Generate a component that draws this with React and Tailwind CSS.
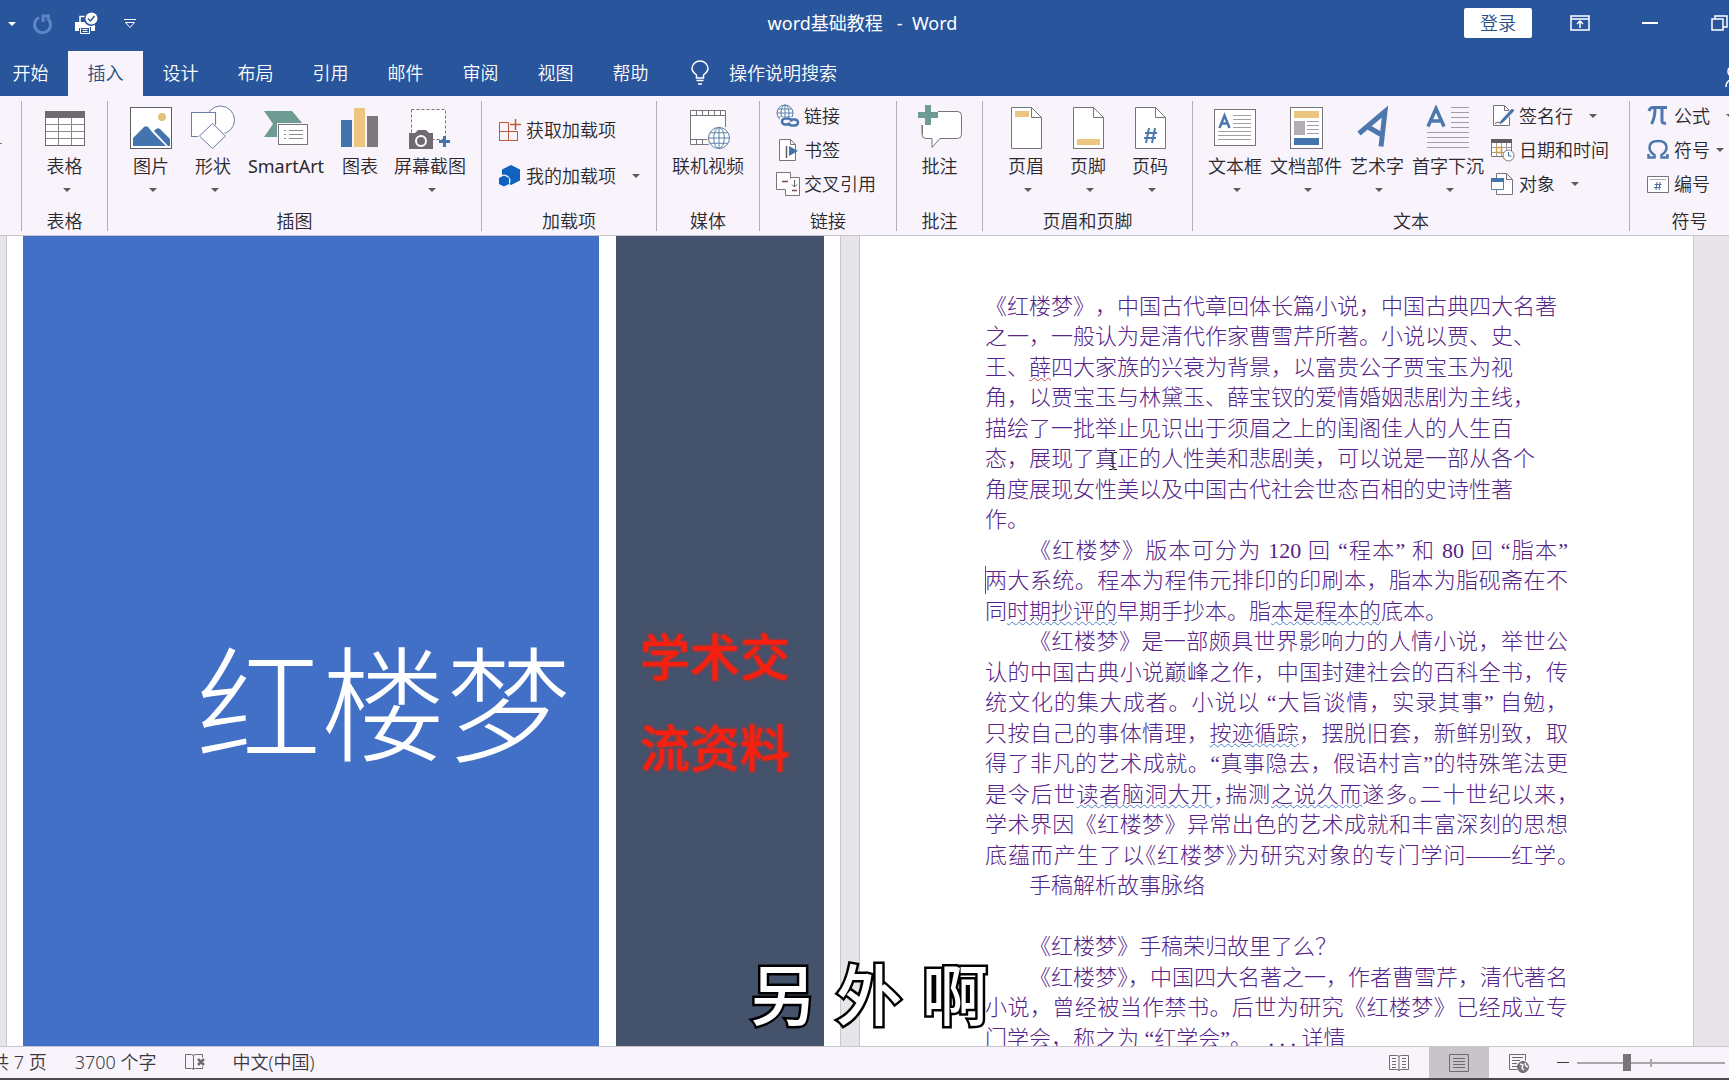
import React, { useState } from 'react';

const TABS = ['开始', '插入', '设计', '布局', '引用', '邮件', '审阅', '视图', '帮助'];

const Caret = ({ className = '' }) => (
    <svg width="8" height="4" viewBox="0 0 8 4" className={`shrink-0 fill-[#5c5a60] ${className}`} aria-hidden="true">
        <path d="M0 0h8L4 4z" />
    </svg>
);

/* ---------- large ribbon icons (44 x 44) ---------- */

const Icon = ({ size = 44, children }) => (
    <svg width={size} height={size} viewBox={`0 0 ${size} ${size}`} fill="none" className="shrink-0" aria-hidden="true">
        {children}
    </svg>
);

const TableIcon = () => (
    <Icon>
        <rect x="2.500" y="6.500" width="39" height="34" fill="#fff" stroke="#6e6a70" />
        <rect x="2" y="6" width="40" height="7" fill="#6e6a70" />
        <path d="M15.500 13v27M28.500 13v27M3 19.500h38M3 26.500h38M3 33.500h38" stroke="#8a868c" />
    </Icon>
);

const PictureIcon = () => (
    <Icon>
        <rect x="1.500" y="2.500" width="41" height="41" fill="#fff" stroke="#5f5c62" />
        <circle cx="33" cy="12" r="4" fill="#e2c07e" />
        <path d="M4 41v-8l11-11q2-1.500 4 0l5 6 13 13z" fill="#4474ad" />
        <path d="M25 26l2-2q2-1.500 4 0l10 10v7h-2z" fill="#4474ad" />
    </Icon>
);

const ShapesIcon = () => (
    <Icon>
        <circle cx="29.500" cy="15" r="14" fill="#fff" stroke="#6b7fa3" />
        <rect x="0" y="7" width="26" height="25" fill="#f9f4fb" />
        <rect x=".5" y="7.500" width="24" height="24" fill="#fff" stroke="#6b7fa3" />
        <path d="M21.500 17l15 14-15 14-15-14z" fill="#f9f4fb" />
        <path d="M21.500 18.500l13 12.500-13 12.500L8.500 31z" fill="#fff" stroke="#6b7fa3" />
    </Icon>
);

const SmartArtIcon = () => (
    <Icon>
        <path d="M0 6h28l11 13H14v13H0l9-13z" fill="#6f9c92" />
        <rect x="13" y="18" width="32" height="23" fill="#f9f4fb" />
        <rect x="14.500" y="19.500" width="29" height="20" fill="#fff" stroke="#77747a" />
        <path d="M20 25.500h2M20 29.500h2M20 33.500h2M25 25.500h14M25 29.500h14M25 33.500h14" stroke="#8a878d" />
    </Icon>
);

const ChartIcon = () => (
    <Icon>
        <rect x="3" y="15" width="11" height="27" fill="#4474ad" />
        <rect x="16" y="3" width="11" height="39" fill="#ecc67f" />
        <rect x="29" y="11" width="11" height="31" fill="#7c787d" />
    </Icon>
);

const ScreenshotIcon = () => (
    <Icon>
        <rect x="3.500" y="4.500" width="34" height="30" fill="#fff" stroke="#77747a" strokeDasharray="3 2" />
        <path d="M1 28h6l3-3h8l3 3h4v16H1z" fill="#6e6a70" />
        <circle cx="13" cy="36" r="5" fill="#6e6a70" stroke="#fff" strokeWidth="2" />
        <path d="M31 36.500h11M36.500 31v11" stroke="#4474ad" strokeWidth="3" />
    </Icon>
);

const Globe = ({ x, y, r }) => (
    <g transform={`translate(${x} ${y})`} stroke="#5b80a8">
        <circle r={r} fill="#fff" />
        <ellipse rx={r / 2} ry={r} />
        <path d={`M${-r} 0H${r}M0 ${-r}V${r}M${-r * 0.85} ${-r / 2}H${r * 0.85}M${-r * 0.85} ${r / 2}H${r * 0.85}`} />
    </g>
);

const VideoIcon = () => (
    <Icon>
        <path d="M4.500 5.500h35v34h-35z" fill="#fff" />
        <path d="M39.500 22V5.500h-35v34h18v-5h-18M4.500 10.500h35M10.500 5.500v5M16.500 5.500v5M22.500 5.500v5M28.500 5.500v5M34.500 5.500v5M10.500 34.500v5M16.500 34.500v5" stroke="#77747a" />
        <circle cx="33" cy="33" r="12" fill="#f9f4fb" />
        <Globe x={33} y={33} r={10.5} />
    </Icon>
);

const CommentIcon = () => (
    <Icon>
        <path d="M4.500 6.500h35q4 0 4 4v19q0 4-4 4H22l-8 9v-9H8q-4 0-4-4v-19z" fill="#fff" stroke="#77747a" />
        <path d="M-1 -1h21v21H-1z" fill="#f9f4fb" />
        <path d="M20 6.500h20M4.500 20v9" stroke="#77747a" />
        <path d="M8 12h12v8H8z" fill="#fff" />
        <path d="M0 10h20M10 0v20" stroke="#6f9c92" strokeWidth="6" />
    </Icon>
);

const PageIcon = ({ children }) => (
    <Icon>
        <path d="M7.500 2.500h20l10 10v31h-30z" fill="#fff" stroke="#77747a" />
        <path d="M27.500 2.500v10h10" stroke="#77747a" />
        {children}
    </Icon>
);

const TextBoxIcon = () => (
    <Icon>
        <rect x="1.500" y="4.500" width="41" height="36" fill="#fff" stroke="#77747a" />
        <path d="M6.500 23l5-12.500 5 12.500M8 18.500h7" stroke="#4d78ad" strokeWidth="2.500" />
        <path d="M20 10.500h18M20 14.500h18M20 18.500h18M20 22.500h18M5 26.500h33M5 30.500h33M5 34.500h33" stroke="#a19da4" />
    </Icon>
);

const QuickPartsIcon = () => (
    <Icon>
        <rect x="6.500" y="2.500" width="32" height="41" fill="#fff" stroke="#77747a" />
        <rect x="10" y="6" width="25" height="7" fill="#ecc67f" />
        <rect x="10" y="16" width="11" height="14" fill="#b3aeb5" />
        <path d="M23 16.500h12M23 20.500h12M23 24.500h12M23 28.500h12" stroke="#a19da4" />
        <rect x="10" y="33" width="25" height="7" fill="#4474ad" />
    </Icon>
);

const WordArtIcon = () => (
    <Icon>
        <path d="M4 28.500L30 6.500l-4 35M13 22l14 8" stroke="#4d78ad" strokeWidth="5" />
    </Icon>
);

const DropCapIcon = () => (
    <Icon>
        <path d="M2 21.500L10 3.500l8 18M5 16h10" stroke="#4d78ad" strokeWidth="3.500" />
        <path d="M25 2.500h18M25 7.500h18M25 12.500h18M25 17.500h18M25 22.500h18M1 27.500h42M1 32.500h42M1 37.500h42M1 42.500h42" stroke="#a19da4" />
    </Icon>
);

/* ---------- small ribbon icons (24 x 24) ---------- */

const GetAddinsIcon = () => (
    <Icon size={24}>
        <path d="M1.500 4.500h9v18h-9zM1.500 13.500h18v9h-18zM19.500 13.500v9" stroke="#c0593a" />
        <path d="M17.500 1v11M12 6.500h11" stroke="#c0593a" strokeWidth="1.500" />
    </Icon>
);

const MyAddinsIcon = () => (
    <Icon size={24}>
        <path d="M13 1l9 4.500v11L13 21l-9-4.500v-11z" fill="#0f62bd" />
        <circle cx="6" cy="17" r="6.500" fill="#f9f4fb" />
        <path d="M6 11.500l5 2.500v6L6 22.500 1 20v-6z" fill="#0f62bd" />
    </Icon>
);

const LinkIcon = () => (
    <Icon size={24}>
        <Globe x={9} y={9} r={8} />
        <rect x="4" y="13" width="19" height="10" fill="#f9f4fb" />
        <path d="M13 20.500h-4q-3-.5-3-3t3-3h3q3 0 3.500 3M15 15.500h4q3 .5 3 3t-3 3h-3q-3 0-3.500-3" stroke="#4474ad" strokeWidth="2.500" />
    </Icon>
);

const BookmarkIcon = () => (
    <Icon size={24}>
        <path d="M3.500 1.500h11l5 5v16h-16zM14.500 1.500v5h5" fill="#fff" stroke="#77747a" />
        <path d="M10.500 8v12" stroke="#5f5c62" strokeWidth="1.500" />
        <path d="M13 8l9 5-9 5z" fill="#4474ad" />
    </Icon>
);

const CrossRefIcon = () => (
    <Icon size={24}>
        <path d="M.5.500h14v17H.5z" fill="#fff" stroke="#77747a" />
        <path d="M15 5.500h8.500v18h-14V18" fill="#fff" stroke="#77747a" />
        <path d="M6 9.500h6M16 18.500h5" stroke="#7a4a4a" strokeWidth="1.500" />
        <path d="M18.500 8v7M16 12.500l2.500 2.500 2.500-2.500" stroke="#5f5c62" />
    </Icon>
);

const SignatureIcon = () => (
    <Icon size={24}>
        <path d="M2.500 1.500h11l5 5v15h-16zM13.500 1.500v5h5" fill="#fff" stroke="#77747a" />
        <path d="M9 17L21 4l3 2.500L12 19l-4 1.500z" fill="#4474ad" stroke="#f9f4fb" />
        <path d="M4 19.500q3-3 6 0" stroke="#5f5c62" />
    </Icon>
);

const DateIcon = () => (
    <Icon size={24}>
        <path d="M.5 1.500h20v17H.5z" fill="#fff" stroke="#77747a" />
        <path d="M0 1h21v4H0z" fill="#5f5c62" />
        <path d="M5.500 5v13M10.500 5v13M15.500 5v13M1 9.500h19M1 14.500h19" stroke="#a19da4" />
        <path d="M5.500 9.500h5v5h-5z" stroke="#d09a3e" strokeWidth="1.500" />
        <circle cx="17.500" cy="17.500" r="5.500" fill="#fff" stroke="#77747a" />
        <path d="M17.500 14v4h3" stroke="#4474ad" />
    </Icon>
);

const ObjectIcon = () => (
    <Icon size={24}>
        <path d="M5.500 1.500h10l6 6v15h-16zM15.500 1.500v6h6" fill="#fff" stroke="#77747a" />
        <path d="M.5 6.500h12v11H.5z" fill="#fff" stroke="#5b80a8" />
        <path d="M0 6h13v4H0z" fill="#4474ad" />
    </Icon>
);

const PiIcon = () => (
    <Icon size={24}>
        <path d="M3 7q1-3.500 4-3.500h14" stroke="#4d78ad" strokeWidth="3" />
        <path d="M9 4q0 10-3.500 16M16 4v13q0 3 4 2" stroke="#4d78ad" strokeWidth="3" />
    </Icon>
);

const OmegaIcon = () => (
    <Icon size={24}>
        <path d="M2.500 16v3.500h6V17q-5-3-5-7.500 0-6.500 8.500-6.500t8.500 6.500q0 4.500-5 7.500v2.500h6V16" stroke="#4d78ad" strokeWidth="2.500" />
    </Icon>
);

const NumberIcon = () => (
    <Icon size={24}>
        <path d="M1.500 4.500h21v16h-21z" fill="#fff" stroke="#77747a" />
        <path d="M4 7.500h16" stroke="#b3aeb5" />
        <path d="M11 10l-1 8M14 10l-1 8M8.500 12.500h7M8 15.500h7" stroke="#4d6d9a" />
    </Icon>
);

/* ---------- ribbon parts ---------- */

const BigButton = ({ icon, label, caret, className = '' }) => (
    <button className={`flex flex-col items-center whitespace-nowrap ${className}`}>
        {icon}
        <span className="mt-[5px] leading-6">{label}</span>
        {caret && <Caret className="mt-[10px] ml-1" />}
    </button>
);

const SmallButton = ({ icon, label, caret, caretGap = 'ml-4' }) => (
    <button className="flex h-[34px] items-center whitespace-nowrap">
        {icon}
        <span className="ml-1 leading-6">{label}</span>
        {caret && <Caret className={caretGap} />}
    </button>
);

const Group = ({ label, className = '', children }) => (
    <section
        aria-label={label}
        className={`mb-1 flex shrink-0 flex-col border-r border-[#b5b0b8] ${className}`}
    >
        <div className="flex h-[110px] shrink-0 items-start pt-1">{children}</div>
        <div className="text-center leading-5">{label}</div>
    </section>
);

const TitleBar = () => (
    <header className="grid h-[51px] grid-cols-[1fr_auto_1fr] items-start text-white">
        <div className="flex h-12 items-center pl-2">
            <svg width="8" height="4" viewBox="0 0 8 4" fill="#fff"><path d="M0 0h8L4 4z" /></svg>
            <button aria-label="重复" className="ml-4">
                <svg width="22" height="22" viewBox="0 0 22 22" fill="none" stroke="#5f86c4" strokeWidth="3">
                    <path d="M7 4.500a8 8 0 1 0 8 .5" />
                    <path d="M11 9V3h7" />
                </svg>
            </button>
            <button aria-label="快速打印" className="ml-5">
                <svg width="24" height="24" viewBox="0 0 24 24" fill="none">
                    <path d="M1 10h20v9h-4v-3H5v3H1z" fill="#fff" />
                    <path d="M6 10V4.500h8" stroke="#fff" strokeWidth="1.500" />
                    <path d="M6 15h11v7H6z" fill="#28559c" />
                    <path d="M6.500 15.500h9v6h-9zM8.500 17.500h5M8.500 19.500h5" stroke="#fff" />
                    <circle cx="17" cy="7" r="7" fill="#28559c" />
                    <circle cx="17.500" cy="6.500" r="6" fill="#fff" />
                    <path d="M14 6.500l2.500 2.500 4-5" stroke="#28559c" strokeWidth="1.500" />
                </svg>
            </button>
            <button aria-label="自定义快速访问工具栏" className="ml-[26px]">
                <svg width="12" height="10" viewBox="0 0 12 10" fill="none" stroke="#fff">
                    <path d="M0 .5h12M1.500 3.500h9L6 8.500z" />
                </svg>
            </button>
        </div>
        <h1 className="pt-[11px] pr-1 text-[18px] leading-6 font-normal whitespace-pre">word基础教程&nbsp;&nbsp; -&nbsp; Word</h1>
        <div className="flex h-[46px] items-center justify-end">
            <button className="h-[30px] w-[68px] rounded-xs bg-white text-[18px] leading-6 text-[#2a4f86]">登录</button>
            <button aria-label="功能区显示选项" className="ml-[38px]">
                <svg width="20" height="16" viewBox="0 0 20 16" fill="none" stroke="#fff" strokeWidth="1.500">
                    <path d="M1 1h18v14H1zM1 4h18M10 13V6M7 9l3-3 3 3" />
                </svg>
            </button>
            <button aria-label="最小化" className="ml-[52px] h-[2px] w-4 bg-white" />
            <button aria-label="还原" className="ml-[53px]">
                <svg width="18" height="16" viewBox="0 0 18 16" fill="none" stroke="#fff" strokeWidth="1.500">
                    <path d="M1 4h11v11H1zM4 4V1h12v11h-4" />
                </svg>
            </button>
        </div>
    </header>
);

const TabBar = ({ active, onSelect }) => (
    <nav className="flex h-[45px] items-stretch overflow-hidden text-[18px] text-white">
        <div className="-ml-[7px] flex">
            {TABS.map((tab) => (
                <button
                    key={tab}
                    onClick={() => onSelect(tab)}
                    className={`w-[75px] pb-[2px] leading-6 ${tab === active ? 'bg-[#f9f4fb] text-[#2a4f86]' : ''}`}
                >
                    {tab}
                </button>
            ))}
        </div>
        <button className="ml-[23px] flex items-center pb-[2px]">
            <svg width="18" height="26" viewBox="0 0 18 26" fill="none" stroke="#fff" strokeWidth="1.500">
                <path d="M5.500 18v-3Q1 11.500 1 8.500a8 7.500 0 0 1 16 0q0 3-4.500 6.500v3zM5.500 20.500h7M7 24h4" />
            </svg>
            <span className="ml-5 leading-6">操作说明搜索</span>
        </button>
        <svg width="4" height="22" viewBox="0 0 4 22" fill="none" stroke="#fff" strokeWidth="1.500" className="mt-4 ml-auto">
            <path d="M4 1q-2 3 0 7M1 20q0-5 4-7" />
        </svg>
    </nav>
);

const Ribbon = () => (
    <div className="flex h-[140px] shrink-0 overflow-hidden border-b border-[#c9c5cc] bg-[#f9f4fb] pt-[5px] text-[18px] text-[#2b282e]">
        <div className="mb-1 w-[22px] shrink-0 border-r border-[#b5b0b8] pt-[42px]">
            <div className="h-px w-[2px] bg-[#77747a]" />
        </div>
        <Group label="表格" className="w-[86px]">
            <BigButton icon={<TableIcon />} label="表格" caret className="w-full" />
        </Group>
        <Group label="插图" className="w-[374px]">
            <div className="flex pl-3">
                <BigButton icon={<PictureIcon />} label="图片" caret className="w-[62px]" />
                <BigButton icon={<ShapesIcon />} label="形状" caret className="w-[62px]" />
                <BigButton icon={<SmartArtIcon />} label="SmartArt" className="w-[84px] font-normal" />
                <BigButton icon={<ChartIcon />} label="图表" className="w-[64px]" />
                <BigButton icon={<ScreenshotIcon />} label="屏幕截图" caret className="w-[76px]" />
            </div>
        </Group>
        <Group label="加载项" className="w-[175px]">
            <div className="flex flex-col gap-3 pt-2 pl-4">
                <SmallButton icon={<GetAddinsIcon />} label="获取加载项" />
                <SmallButton icon={<MyAddinsIcon />} label="我的加载项" caret />
            </div>
        </Group>
        <Group label="媒体" className="w-[103px]">
            <BigButton icon={<VideoIcon />} label="联机视频" className="w-full" />
        </Group>
        <Group label="链接" className="w-[137px]">
            <div className="-mt-[6px] flex flex-col pl-4">
                <SmallButton icon={<LinkIcon />} label="链接" />
                <SmallButton icon={<BookmarkIcon />} label="书签" />
                <SmallButton icon={<CrossRefIcon />} label="交叉引用" />
            </div>
        </Group>
        <Group label="批注" className="w-[86px]">
            <BigButton icon={<CommentIcon />} label="批注" className="w-full" />
        </Group>
        <Group label="页眉和页脚" className="w-[210px]">
            <div className="flex pl-3">
                <BigButton
                    icon={<PageIcon><path d="M11 6h14v6H11z" fill="#ecc67f" /></PageIcon>}
                    label="页眉"
                    caret
                    className="w-[62px]"
                />
                <BigButton
                    icon={<PageIcon><path d="M11 34h23v6H11z" fill="#ecc67f" /></PageIcon>}
                    label="页脚"
                    caret
                    className="w-[62px]"
                />
                <BigButton
                    icon={<PageIcon><path d="M21 23l-3 15M27 23l-3 15M17 28h12M16 33h12" stroke="#4d78ad" strokeWidth="2" /></PageIcon>}
                    label="页码"
                    caret
                    className="w-[62px]"
                />
            </div>
        </Group>
        <Group label="文本" className="w-[437px]">
            <div className="flex pl-[7px]">
                <BigButton icon={<TextBoxIcon />} label="文本框" caret className="w-[70px]" />
                <BigButton icon={<QuickPartsIcon />} label="文档部件" caret className="w-[72px]" />
                <BigButton icon={<WordArtIcon />} label="艺术字" caret className="w-[70px]" />
                <BigButton icon={<DropCapIcon />} label="首字下沉" caret className="w-[72px]" />
            </div>
            <div className="-mt-[6px] flex flex-col pl-[7px]">
                <SmallButton icon={<SignatureIcon />} label="签名行" caret />
                <SmallButton icon={<DateIcon />} label="日期和时间" />
                <SmallButton icon={<ObjectIcon />} label="对象" caret />
            </div>
        </Group>
        <Group label="符号" className="w-[120px]">
            <div className="-mt-[6px] flex flex-col pl-4">
                <SmallButton icon={<PiIcon />} label="公式" caret />
                <SmallButton icon={<OmegaIcon />} label="符号" caret caretGap="ml-[6px]" />
                <SmallButton icon={<NumberIcon />} label="编号" />
            </div>
        </Group>
    </div>
);

/* ---------- document ---------- */

const Wavy = ({ error, children }) => (
    <span
        className={`underline decoration-wavy decoration-1 underline-offset-2 [text-decoration-skip-ink:none] ${error ? 'decoration-[#d64545]' : 'decoration-[#4f7fc9]'}`}
    >
        {children}
    </span>
);

// full: spread over the whole measure, indent: first line of a paragraph, tight: half-width punctuation
const Line = ({ full, indent, tight, children }) => (
    <div
        className={`relative h-[30px] leading-[30px] whitespace-nowrap even:h-[31px] ${full ? '[text-align-last:justify]' : '[text-spacing-trim:space-all]'} ${indent ? 'pl-11' : ''} ${tight ? "[font-feature-settings:'halt']" : ''}`}
    >
        {children}
    </div>
);

const CoverPage = () => (
    <div className="ml-[6px] flex w-[835px] shrink-0 border-x border-[#c9c5cc] bg-white pl-4">
        <div className="flex w-[576px] shrink-0 flex-col items-end bg-[#4170c6] pt-[378px] pr-[28px]">
            <h2 className="text-[125px] leading-[180px] font-light whitespace-nowrap text-white">红楼梦</h2>
        </div>
        <div className="ml-[17px] w-[208px] shrink-0 bg-[#44526b] pt-[376px] pl-6">
            <p className="w-[150px] text-[50px] leading-[91px] font-medium text-[#f5200f] [text-shadow:0_0_3px_#f5200f]">
                学术交流资料
            </p>
        </div>
    </div>
);

const TextPage = () => (
    <div className="ml-[18px] w-[835px] shrink-0 border-x border-[#c9c5cc] bg-white pt-[56px] pl-[125px]">
        <article className="w-[583px] font-['Liberation_Serif','Noto_Sans_CJK_SC',serif] text-[22px] font-light text-[#562488]">
            <Line>《红楼梦》，中国古代章回体长篇小说，中国古典四大名著</Line>
            <Line>之一，一般认为是清代作家曹雪芹所著。小说以贾、史、</Line>
            <Line>王、<Wavy error>薛</Wavy>四大家族的兴衰为背景，以富贵公子贾宝玉为视</Line>
            <Line>角，以贾宝玉与林黛玉、薛宝钗的爱情婚姻悲剧为主线，</Line>
            <Line>描绘了一批举止见识出于须眉之上的闺阁佳人的人生百</Line>
            <Line>
                态，展现了真正的人性美和悲剧美，可以说是一部从各个
                <svg width="8" height="18" viewBox="0 0 8 18" fill="none" stroke="#111" className="absolute top-2 left-[124px]">
                    <path d="M0 .5h3.500M4.500 .5H8M4 1v16M0 17.500h3.500M4.500 17.500H8" />
                </svg>
            </Line>
            <Line>角度展现女性美以及中国古代社会世态百相的史诗性著</Line>
            <Line>作。</Line>
            <Line full indent>《红楼梦》版本可分为 120 回 “程本” 和 80 回 “脂本”</Line>
            <Line full>
                <span className="absolute top-0 left-0 h-7 w-px bg-[#555]" />
                两大系统。程本为程伟元排印的印刷本，脂本为脂砚斋在不
            </Line>
            <Line>同<Wavy>时期抄评的</Wavy>早期手抄本。脂<Wavy>本是程本的</Wavy>底本。</Line>
            <Line full indent>《红楼梦》是一部颇具世界影响力的人情小说，举世公</Line>
            <Line full>认的中国古典小说巅峰之作，中国封建社会的百科全书，传</Line>
            <Line full>统文化的集大成者。小说以 “大旨谈情，实录其事” 自勉，</Line>
            <Line full>只按自己的事体情理，<Wavy>按迹循踪</Wavy>，摆脱旧套，新鲜别致，取</Line>
            <Line full>得了非凡的艺术成就。“真事隐去，假语村言”的特殊笔法更</Line>
            <Line full tight>是令后世<Wavy>读者脑洞大开</Wavy>，揣测<Wavy>之说久而</Wavy>遂多。二十世纪以来，</Line>
            <Line full>学术界因《红楼梦》异常出色的艺术成就和丰富深刻的思想</Line>
            <Line full tight>底蕴而产生了以《红楼梦》为研究对象的专门学问——红学。</Line>
            <Line indent>手稿解析故事脉络</Line>
            <Line />
            <Line indent>《红楼梦》手稿荣归故里了么？</Line>
            <Line full indent>《红楼梦》，中国四大名著之一，作者曹雪芹，清代著名</Line>
            <Line full>小说，曾经被当作禁书。后世为研究《红楼梦》已经成立专</Line>
            <Line>门学会，称之为 “红学会”。 &nbsp; . . . 详情</Line>
        </article>
    </div>
);

const StatusBar = () => (
    <footer className="flex h-[34px] shrink-0 items-stretch overflow-hidden border-t border-b-2 border-t-[#c9c5cc] border-b-[#4b484e] bg-[#f9f4fb] text-[18px] whitespace-nowrap text-[#3a373d]">
        <div className="flex items-center pb-[2px] leading-6">
            <span className="-ml-[9px]">共 7 页</span>
            <span className="ml-7">3700 个字</span>
            <svg width="22" height="18" viewBox="0 0 22 18" fill="none" className="ml-7" aria-hidden="true">
                <path d="M1.500 1.500h6q2 0 2 2v13q0-1-2-1h-6zM9.500 3.500q0-2 2-2h7v3M9.500 16.500q0-1 2-1h7v-2" stroke="#6e6a70" />
                <path d="M14 6l6 6M20 6l-6 6" stroke="#6e6a70" strokeWidth="2.500" />
            </svg>
            <span className="ml-[26px]">中文(中国)</span>
        </div>
        <div className="ml-auto flex items-center">
            <button aria-label="阅读视图" className="flex h-full w-[60px] items-center justify-center">
                <svg width="20" height="18" viewBox="0 0 20 18" fill="none" stroke="#6e6a70">
                    <path d="M.5 1.500h7q2 0 2.500 1 .5-1 2.500-1h7v14h-7q-2 0-2.500 1-.5-1-2.500-1h-7zM10 2v15" />
                    <path d="M3 4.500h4M3 7.500h4M3 10.500h4M3 13.500h4M13 4.500h4M13 7.500h4M13 10.500h4M13 13.500h4" />
                </svg>
            </button>
            <button aria-label="页面视图" className="flex h-full w-[60px] items-center justify-center bg-[#c8c5ca]">
                <svg width="20" height="18" viewBox="0 0 20 18" fill="none" stroke="#6e6a70">
                    <path d="M.5.500h19v17H.5zM4 4.500h12M4 7.500h12M4 10.500h12M4 13.500h12" />
                </svg>
            </button>
            <button aria-label="Web 版式视图" className="flex h-full w-[60px] items-center justify-center">
                <svg width="20" height="20" viewBox="0 0 20 20" fill="none" stroke="#6e6a70">
                    <path d="M8 16.500H.5v-15h16v6M3 4.500h11M3 7.500h8M3 10.500h5M3 13.500h5" />
                    <circle cx="14" cy="14" r="5.500" fill="#77747a" />
                    <path d="M11 11l3 1-1 3 2 2M16 10l1 3 2 1" stroke="#f9f4fb" strokeWidth="1.500" />
                </svg>
            </button>
            <button aria-label="缩小" className="ml-2 h-px w-3 bg-[#3a373d]" />
            <div className="relative ml-2 flex h-full w-[148px] items-center">
                <span className="absolute top-3 left-[73px] h-2 w-[2px] bg-[#a9a5ab]" />
                <input
                    type="range"
                    aria-label="缩放级别"
                    min="0"
                    max="100"
                    defaultValue="33"
                    className="relative h-[2px] w-full appearance-none bg-[#a9a5ab] [&::-webkit-slider-thumb]:h-[17px] [&::-webkit-slider-thumb]:w-2 [&::-webkit-slider-thumb]:appearance-none [&::-webkit-slider-thumb]:bg-[#77747a]"
                />
            </div>
            <div className="w-1" />
        </div>
    </footer>
);

export default function App() {
    const [activeTab, setActiveTab] = useState('插入');

    return (
        <div className="flex h-screen flex-col overflow-hidden bg-[#28559c] font-['Noto_Sans','Noto_Sans_CJK_SC',sans-serif] font-[350]">
            <TitleBar />
            <TabBar active={activeTab} onSelect={setActiveTab} />
            <Ribbon />
            <main className="relative flex min-h-0 flex-1 overflow-hidden bg-[#e8e5ea]">
                <CoverPage />
                <TextPage />
                {/* video subtitle */}
                <p className="absolute bottom-[10px] left-[750px] flex gap-5 text-[66px] leading-[84px] font-medium text-white [-webkit-text-stroke:5px_#000] [paint-order:stroke_fill]">
                    <span>另</span>
                    <span>外</span>
                    <span>啊</span>
                </p>
            </main>
            <StatusBar />
        </div>
    );
}
